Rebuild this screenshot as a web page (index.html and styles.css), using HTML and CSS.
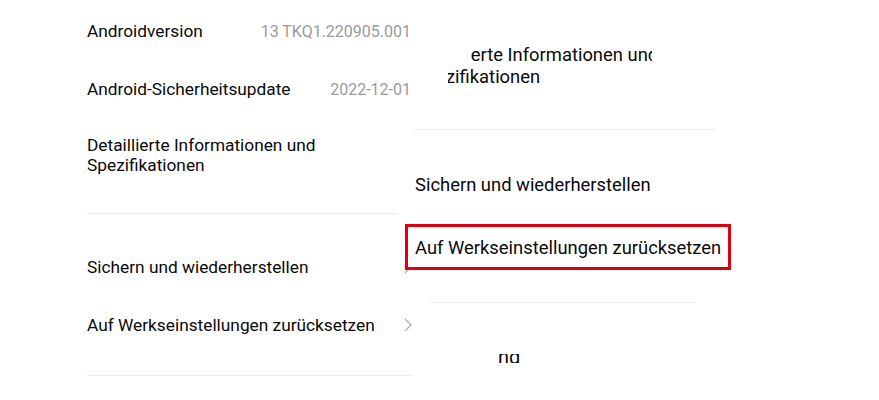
FILE: index.html
```html
<!DOCTYPE html>
<html lang="de">
<head>
<meta charset="utf-8">
<link rel="stylesheet" href="styles.css">
</head>
<body>
<div class="stage">
  <div class="list">
    <div class="item item-first">
      <span class="label">Androidversion</span>
      <span class="value">13 TKQ1.220905.001</span>
    </div>
    <div class="item">
      <span class="label">Android-Sicherheitsupdate</span>
      <span class="value">2022-12-01</span>
    </div>
    <div class="item item-tall">
      <span class="label">Detaillierte Informationen und<br>Spezifikationen</span>
    </div>
    <div class="sep sep-short"></div>
    <div class="item item-spaced">
      <span class="label">Sichern und wiederherstellen</span>
      <svg class="chev" width="8" height="14" viewBox="0 0 8 14"><path d="M1 1 L7 7 L1 13" fill="none" stroke="#aaa" stroke-width="1.1"/></svg>
    </div>
    <div class="item">
      <span class="label">Auf Werkseinstellungen zurücksetzen</span>
      <svg class="chev" width="8" height="14" viewBox="0 0 8 14"><path d="M1 1 L7 7 L1 13" fill="none" stroke="#aaa" stroke-width="1.1"/></svg>
    </div>
    <div class="sep sep-long"></div>
  </div>

  <div class="zoom">
    <div class="zdetail">
      <div class="zline zline1"><span class="zinner zinner1">Detaillierte Informationen und</span></div>
      <div class="zline zline2"><span class="zinner zinner2">Spezifikationen</span></div>
    </div>
    <div class="zsep zsep1"></div>
    <div class="zitem">Sichern und wiederherstellen</div>
    <div class="highlight">Auf Werkseinstellungen zurücksetzen</div>
    <div class="zsep zsep2"></div>
    <div class="zcut"><span class="zcut-text">ng</span></div>
  </div>
</div>
</body>
</html>
```
FILE: styles.css
```css
* { box-sizing: border-box; }
html, body {
  margin: 0;
  padding: 0;
  background: #fff;
}
body {
  font-family: Roboto, "Noto Sans", Arial, sans-serif;
  color: #0a0a0a;
}
.stage {
  position: relative;
  width: 879px;
  height: 400px;
  overflow: hidden;
}
.list {
  display: flex;
  flex-direction: column;
  padding-left: 87px;
  padding-top: 2px;
  width: 413px;
}
.item {
  display: flex;
  align-items: center;
  justify-content: space-between;
  height: 58px;
  font-size: 17.3px;
  white-space: nowrap;
}
.item-tall {
  height: 74px;
  line-height: 20px;
}
.item-spaced {
  margin-top: 24px;
}
.label {
  color: #0a0a0a;
}
.value {
  color: #9a9a9a;
  font-size: 16px;
  margin-right: 2px;
}
.chev {
  margin-right: 1px;
}
.sep {
  height: 1px;
  background: #ececec;
  margin-top: 21px;
}
.sep-short { width: 310px; }
.sep-long { width: 326px; margin-top: 21px; }

/* zoomed overlay */
.zoom {
  position: absolute;
  left: 413px;
  top: 0;
  width: 330px;
  height: 400px;
  background: #fff;
  display: flex;
  flex-direction: column;
  font-size: 18.4px;
  color: #0a0a0a;
}
.zdetail {
  margin-top: 44px;
  line-height: 22px;
}
.zline {
  overflow: hidden;
  height: 22px;
  white-space: nowrap;
}
.zline1 { margin-left: 57px; width: 182px; }
.zinner1 { display: inline-block; margin-left: -55px; }
.zline2 { margin-left: 35px; width: 150px; }
.zinner2 { display: inline-block; margin-left: -33px; }
.zsep {
  height: 1px;
  background: #ececec;
}
.zsep1 {
  margin-top: 41px;
  margin-left: 1px;
  width: 301px;
}
.zitem {
  margin-top: 44px;
  margin-left: 2px;
  height: 22px;
  line-height: 22px;
  white-space: nowrap;
}
.highlight {
  margin-top: 28px;
  margin-left: -8px;
  width: 326px;
  height: 46px;
  border: 3px solid #e0000f;
  background: #fff;
  padding-left: 7px;
  display: flex;
  align-items: center;
  white-space: nowrap;
}
.zsep2 {
  margin-top: 32px;
  margin-left: 17px;
  width: 266px;
}
.zcut {
  margin-top: 51px;
  margin-left: 85px;
  height: 9px;
  overflow: hidden;
  line-height: 22px;
  font-size: 20px;
}
.zcut-text {
  display: block;
  margin-top: -8px;
}
```
